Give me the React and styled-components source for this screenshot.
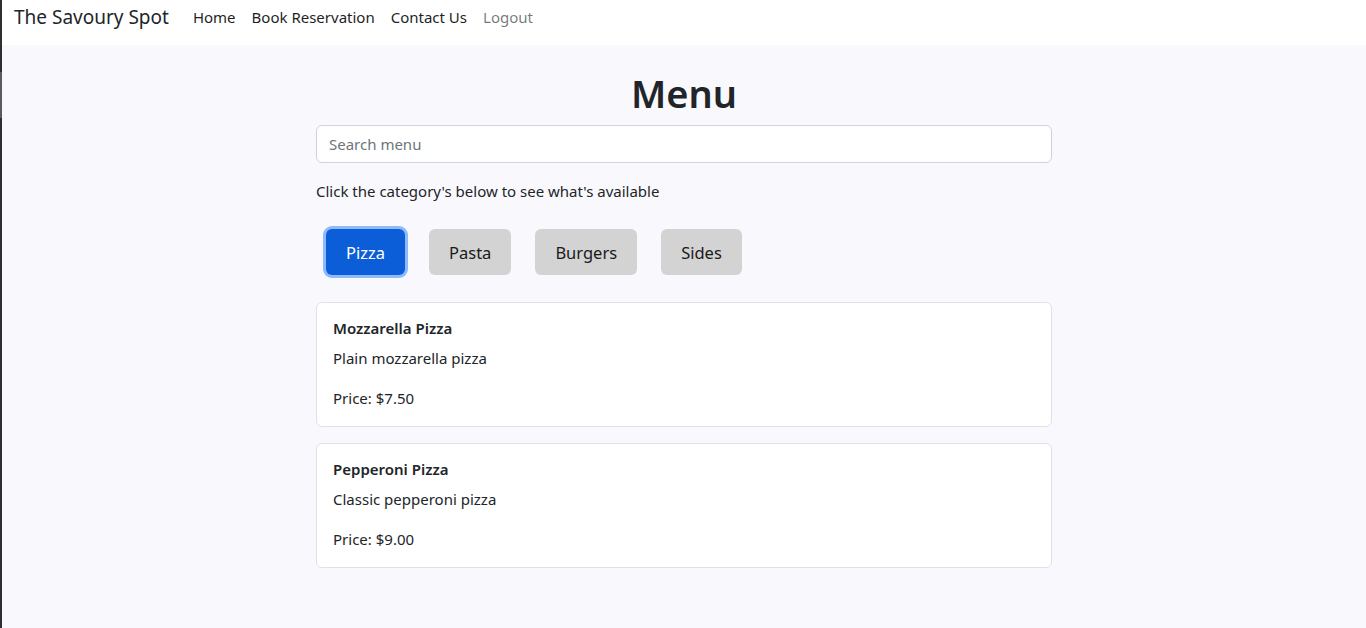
import React, { useState } from "react";
import styled, { createGlobalStyle } from "styled-components";

const Global = createGlobalStyle`
  * { box-sizing: border-box; }
  html, body { margin: 0; padding: 0; }
  body {
    font-family: "Noto Sans", "Open Sans", sans-serif;
    font-size: 15px;
    line-height: 24px;
    color: #212529;
    background: #f9f9fd;
  }
`;

const Frame = styled.div`
  display: flex;
  min-height: 628px;
`;

const Edge = styled.div`
  width: 2px;
  flex: 0 0 2px;
  background: linear-gradient(
    to bottom,
    #2f2f2f 0,
    #2f2f2f 72px,
    #5b5b5b 72px,
    #5b5b5b 118px,
    #2f2f2f 118px
  );
`;

const Main = styled.div`
  flex: 1;
  display: flex;
  flex-direction: column;
  background: #f9f9fd;
`;

const NavBar = styled.nav`
  height: 45px;
  background: #ffffff;
  display: flex;
  align-items: flex-start;
  padding: 2px 12px 0;
`;

const Brand = styled.a`
  font-size: 19px;
  line-height: 30px;
  color: #212529;
  text-decoration: none;
  margin-right: 16px;
`;

const NavLinks = styled.div`
  display: flex;
  padding-top: 1px;
`;

const NavLink = styled.a`
  font-size: 15px;
  line-height: 28px;
  padding: 0 8px;
  color: ${(p) => (p.$muted ? "rgba(0,0,0,0.55)" : "#1f1f1f")};
  text-decoration: none;
`;

const Container = styled.div`
  width: 736px;
  margin: 0 auto;
  padding-top: 24px;
`;

const Title = styled.h1`
  margin: 0 0 8px;
  font-size: 38px;
  line-height: 48px;
  font-weight: 600;
  text-align: center;
  color: #212529;
`;

const Search = styled.input`
  display: block;
  width: 100%;
  height: 38px;
  padding: 6px 12px;
  font-family: inherit;
  font-size: 15px;
  color: #212529;
  background: #fff;
  border: 1px solid #ced4da;
  border-radius: 6px;
  outline: none;
  &::placeholder { color: #6c757d; }
`;

const Hint = styled.p`
  margin: 16px 0 16px;
  line-height: 24px;
`;

const Categories = styled.div`
  display: flex;
  gap: 24px;
  padding: 10px;
`;

const CatButton = styled.button`
  height: 46px;
  padding: 0 20px;
  font-family: inherit;
  font-size: 16.5px;
  border: none;
  border-radius: 6px;
  cursor: pointer;
  background: ${(p) => (p.$active ? "#0b5ed7" : "#d3d3d3")};
  color: ${(p) => (p.$active ? "#ffffff" : "#1a1a1a")};
  box-shadow: ${(p) => (p.$active ? "0 0 0 3px #8dbafd" : "none")};
`;

const List = styled.div`
  display: flex;
  flex-direction: column;
  gap: 16px;
  margin-top: 17px;
`;

const Card = styled.div`
  background: #fff;
  border: 1px solid #dee2e6;
  border-radius: 6px;
  padding: 16px;
`;

const CardTitle = styled.h5`
  margin: 0 0 8px;
  font-size: 15px;
  line-height: 19px;
  font-weight: 600;
  color: #212529;
`;

const CardText = styled.p`
  margin: 0 0 ${(p) => (p.$last ? "0" : "16px")};
  line-height: 24px;
`;

const items = {
  Pizza: [
    { name: "Mozzarella Pizza", desc: "Plain mozzarella pizza", price: "7.50" },
    { name: "Pepperoni Pizza", desc: "Classic pepperoni pizza", price: "9.00" },
  ],
  Pasta: [],
  Burgers: [],
  Sides: [],
};

export default function App() {
  const [cat, setCat] = useState("Pizza");
  return (
    <>
      <Global />
      <Frame>
        <Edge />
        <Main>
          <NavBar>
            <Brand href="#">The Savoury Spot</Brand>
            <NavLinks>
              <NavLink href="#">Home</NavLink>
              <NavLink href="#">Book Reservation</NavLink>
              <NavLink href="#">Contact Us</NavLink>
              <NavLink href="#" $muted>Logout</NavLink>
            </NavLinks>
          </NavBar>
          <Container>
            <Title>Menu</Title>
            <Search placeholder="Search menu" />
            <Hint>Click the category's below to see what's available</Hint>
            <Categories>
              {Object.keys(items).map((c) => (
                <CatButton key={c} $active={c === cat} onClick={() => setCat(c)}>
                  {c}
                </CatButton>
              ))}
            </Categories>
            <List>
              {items[cat].map((it) => (
                <Card key={it.name}>
                  <CardTitle>{it.name}</CardTitle>
                  <CardText>{it.desc}</CardText>
                  <CardText $last>Price: ${it.price}</CardText>
                </Card>
              ))}
            </List>
          </Container>
        </Main>
      </Frame>
    </>
  );
}
